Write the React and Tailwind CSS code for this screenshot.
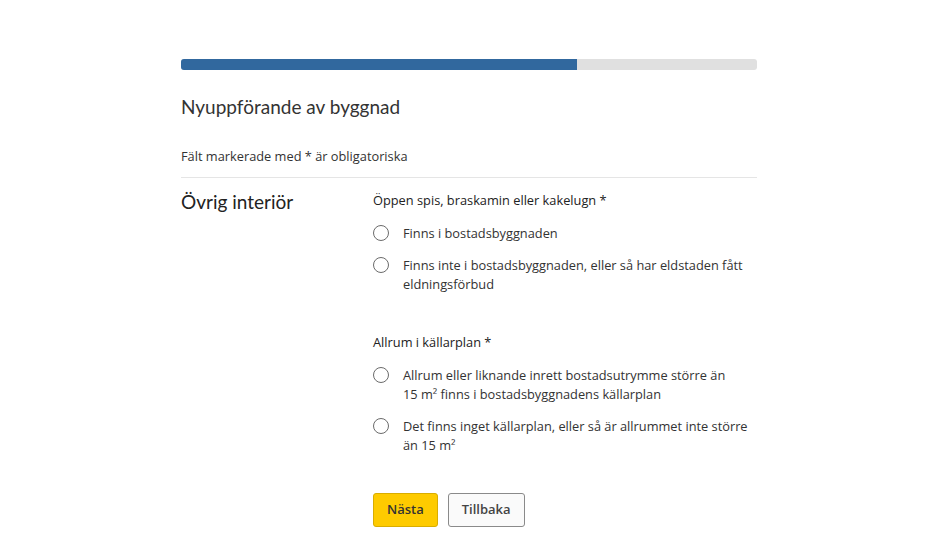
import React, { useState } from 'react';

const questions = [
  {
    id: 'spis',
    label: 'Öppen spis, braskamin eller kakelugn *',
    options: [
      'Finns i bostadsbyggnaden',
      'Finns inte i bostadsbyggnaden, eller så har eldstaden fått eldningsförbud',
    ],
  },
  {
    id: 'allrum',
    label: 'Allrum i källarplan *',
    options: [
      'Allrum eller liknande inrett bostadsutrymme större än 15\u00a0m² finns i bostadsbyggnadens källarplan',
      'Det finns inget källarplan, eller så är allrummet inte större än 15\u00a0m²',
    ],
  },
];

const RadioGroup = ({ question, value, onChange }) => (
  <fieldset className="mb-[39px]">
    <legend className="text-[12.8px] leading-[18px] text-[#222] font-medium mb-[15px]">{question.label}</legend>
    <div className="flex flex-col gap-[13px]">
      {question.options.map((opt, i) => (
        <label key={i} className="flex items-start gap-[14px] cursor-pointer">
          <span className="mt-[1px] w-[16px] h-[16px] rounded-full border border-[#6b6b6b] bg-white flex items-center justify-center shrink-0">
            {value === i && <span className="w-[8px] h-[8px] rounded-full bg-[#2f6aa0]" />}
          </span>
          <input type="radio" className="hidden" checked={value === i} onChange={() => onChange(i)} />
          <span className="text-[12.8px] leading-[19px] text-[#333] max-w-[350px]">{opt}</span>
        </label>
      ))}
    </div>
  </fieldset>
);

const App = () => {
  const [answers, setAnswers] = useState({});

  return (
    <div className="min-h-[558px] bg-white font-['Open_Sans',sans-serif]">
      <div className="w-[576px] ml-[181px] pt-[59px]">
        <div className="h-[11px] rounded-[3px] bg-[#e0e0e0] overflow-hidden">
          <div className="h-full bg-[#31689e]" style={{ width: '68.8%' }} />
        </div>

        <h1 className="mt-[24px] font-['Lato',sans-serif] text-[19px] leading-[26px] text-[#333]">Nyuppförande av byggnad</h1>

        <p className="mt-[27px] text-[12.8px] leading-[18px] text-[#333]">Fält markerade med * är obligatoriska</p>

        <div className="mt-[12px] border-t border-[#e5e5e5] flex pt-[12px]">
          <h2 className="w-[192px] font-['Lato',sans-serif] text-[19px] leading-[24px] text-[#222]">Övrig interiör</h2>
          <div className="flex-1 pt-[1px]">
            {questions.map((q) => (
              <RadioGroup
                key={q.id}
                question={q}
                value={answers[q.id]}
                onChange={(v) => setAnswers({ ...answers, [q.id]: v })}
              />
            ))}
            <div className="flex gap-[10px] -mt-[1px]">
              <button className="h-[34px] px-[13px] rounded-[3px] bg-[#fecb00] border border-[#d9ad00] text-[13px] font-semibold text-[#333]">Nästa</button>
              <button className="h-[34px] px-[13px] rounded-[3px] bg-[#fafafa] border border-[#8a8a8a] text-[13px] font-semibold text-[#444]">Tillbaka</button>
            </div>
          </div>
        </div>
      </div>
    </div>
  );
};

export default App;
